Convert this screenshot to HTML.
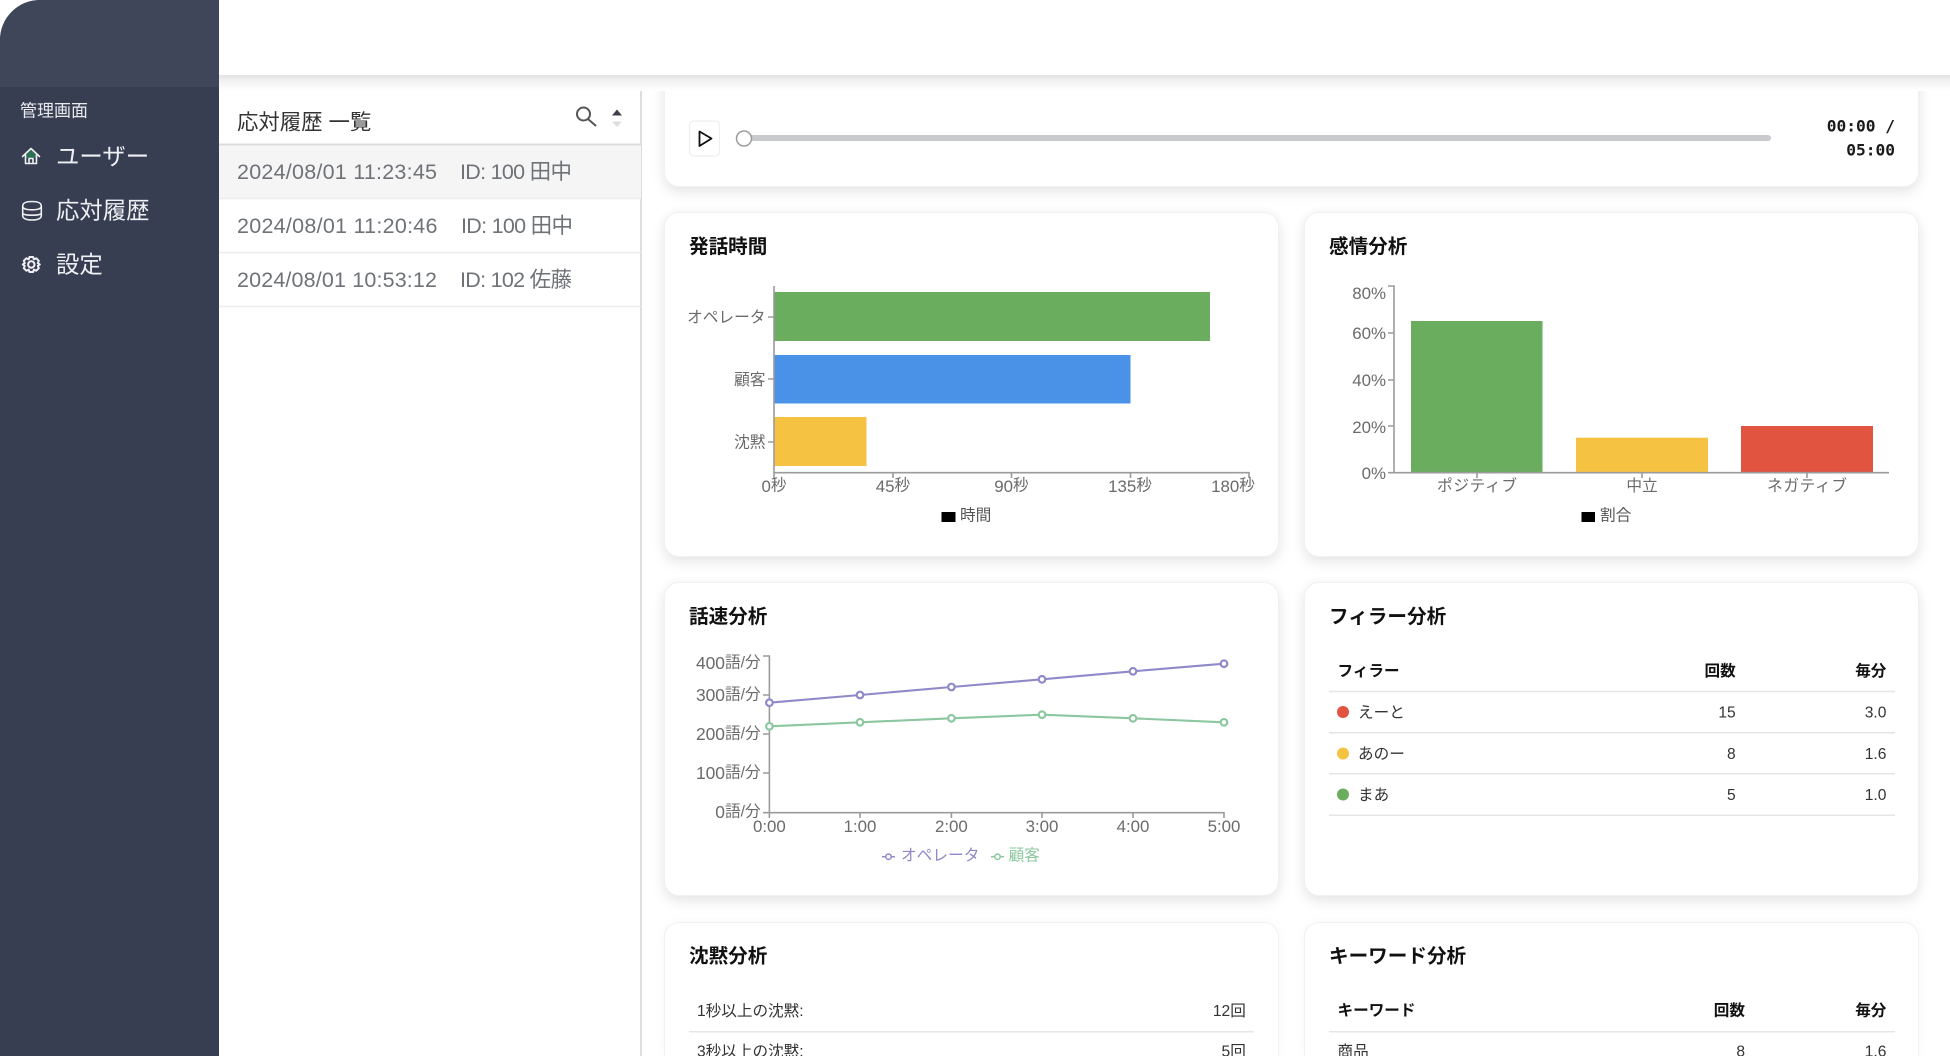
<!DOCTYPE html>
<html lang="ja"><head><meta charset="utf-8"><title>応対履歴</title>
<style>
html,body{margin:0;padding:0;width:1950px;height:1056px;overflow:hidden;background:#fff;font-family:"Liberation Sans","Noto Sans CJK JP",sans-serif}
#wrap{position:relative;width:1950px;height:1056px;overflow:hidden;background:#fff}
.abs{position:absolute;box-sizing:border-box}
.card{position:absolute;box-sizing:border-box;background:#fff;border:1px solid #f1f1f1;border-radius:15px;box-shadow:0 6px 14px rgba(0,0,0,.085),0 0 12px rgba(0,0,0,.035)}
.cut{border-bottom:0;border-radius:15px 15px 0 0;box-shadow:0 0 12px rgba(0,0,0,.035);height:134px}
svg{position:absolute;left:0;top:0;overflow:hidden}
text{font-family:"Liberation Sans","Noto Sans CJK JP",sans-serif;dominant-baseline:central;transform:translateY(1px)}
.ax{font-size:15.7px;fill:#6b6b6b}
.ax tspan{font-size:16.9px}
.ti{font-size:19.6px;font-weight:700;fill:#111}
.th{font-size:15.6px;font-weight:700;fill:#111}
.td{font-size:15.6px;fill:#333}
.r{text-anchor:end}.c{text-anchor:middle}
.li{font-size:21.5px;fill:#6f7378}
.nav{font-size:23.4px;fill:#eef0f3}
.line{stroke:#e6e6e6;stroke-width:1.5}
.axis{stroke:#9b9b9b;stroke-width:1.6;fill:none}
.mono{font-family:"DejaVu Sans Mono","Liberation Mono",monospace;font-size:16.2px;font-weight:700;fill:#1a1a1a}
</style></head>
<body>
<div id="wrap">
<div class="abs" style="left:219px;top:75px;width:423px;height:981px;background:#fff;border-right:2px solid #dedede"></div>
<div class="card" style="left:664px;top:40px;width:1255px;height:147px"></div>
<div class="card" style="left:664px;top:212px;width:615px;height:345px"></div>
<div class="card" style="left:1304px;top:212px;width:615px;height:345px"></div>
<div class="card" style="left:664px;top:582px;width:615px;height:314px"></div>
<div class="card" style="left:1304px;top:582px;width:615px;height:314px"></div>
<div class="card cut" style="left:664px;top:922px;width:615px"></div>
<div class="card cut" style="left:1304px;top:922px;width:615px"></div>
<div class="abs" style="left:219px;top:0;width:1731px;height:75px;background:#fff"></div>
<div class="abs" style="left:219px;top:75px;width:1731px;height:16px;background:linear-gradient(#e3e3e3,#f2f2f2 40%,#fcfcfc 85%,#fff)"></div>
<div class="abs" style="left:0;top:0;width:219px;height:1056px;background:#373e52;border-top-left-radius:40px;overflow:hidden"><div style="height:87px;background:#3f4659"></div></div>

<svg width="1950" height="1056" viewBox="0 0 1950 1056" xmlns="http://www.w3.org/2000/svg">
<!-- sidebar -->
<text x="20" y="110" font-size="17" fill="#e8eaee">管理画面</text>
<text x="56" y="155.500" class="nav">ユーザー</text>
<text x="56" y="209.500" class="nav">応対履歴</text>
<text x="56" y="263.300" class="nav">設定</text>
<path d="M31 149.500L24 156.500H26V158L36.500 158V156.500H38.500Z" fill="#2f6f55"/>
<g fill="none" stroke="#eef0f3" stroke-width="1.600" stroke-linejoin="round" stroke-linecap="round">
<path d="M22.500 156.500L31 148.500L39.500 156.500M25.500 155V163.500H36.500V155M29 163.500V158.500H33V163.500"/>
<path d="M22.700 206C22.700 203 26.500 201.500 32 201.500S41.300 203 41.300 206V215.500C41.300 218.500 37.500 220 32 220S22.700 218.500 22.700 215.500ZM22.700 206C22.700 208.800 26.500 209.800 32 209.800S41.300 208.800 41.300 206M22.700 213C22.700 214.500 26.500 215.200 32 215.200S41.300 214.500 41.300 213"/>
</g>
<g fill="none" stroke="#eef0f3" stroke-linejoin="round">
<circle cx="31.300" cy="264.500" r="3.200" stroke-width="2"/>
<path stroke-width="2" d="M29.500 257H33.100L33.900 259.300L36.300 258.300L38.800 260.800L37.800 263.200L39.800 264.500L37.800 265.800L38.800 268.200L36.300 270.700L33.900 269.700L33.100 272H29.500L28.700 269.700L26.300 270.700L23.800 268.200L24.800 265.800L22.800 264.500L24.800 263.200L23.800 260.800L26.300 258.300L28.700 259.300Z"/>
</g>
<!-- list -->
<text x="237" y="121.500" font-size="21.400" fill="#333">応対履歴 一覧</text>
<g fill="none" stroke="#555" stroke-width="2" stroke-linecap="round"><circle cx="583.500" cy="114" r="6.500"/><path d="M588.500 119.500L595.500 125.500"/></g>
<path d="M612 115.500L617 109.500L622 115.500Z" fill="#3c3f48"/><path d="M612 121.500L617 127L622 121.500Z" fill="#dedede"/>
<rect x="219" y="144" width="422" height="54" fill="#f5f5f5"/>
<path d="M219 144.500H641" stroke="#dcdcdc" stroke-width="2"/>
<path d="M219 198.500H641M219 252.500H641M219 306.500H641" stroke="#ececec" stroke-width="1.500"/>
<text x="237" y="171" class="li" textLength="200">2024/08/01 11:23:45</text>
<text x="460" y="171" class="li" textLength="112">ID: 100 田中</text>
<text x="237" y="225" class="li" textLength="200.500">2024/08/01 11:20:46</text>
<text x="461" y="225" class="li" textLength="112">ID: 100 田中</text>
<text x="237" y="279" class="li" textLength="200">2024/08/01 10:53:12</text>
<text x="460" y="279" class="li" textLength="112">ID: 102 佐藤</text>
<!-- player -->
<rect x="689.500" y="121" width="30" height="35" rx="4.500" fill="#fff" stroke="#eeeeee" stroke-width="1.200"/>
<path d="M699.500 131.500L711.500 138.500L699.500 146Z" fill="none" stroke="#111" stroke-width="1.800" stroke-linejoin="round"/>
<rect x="745" y="135" width="1026" height="6" rx="3" fill="#c9cace"/>
<circle cx="744" cy="138.500" r="7.500" fill="#fff" stroke="#9c9c9c" stroke-width="1.500"/>
<text x="1895" y="125" class="mono r">00:00 /</text>
<text x="1895" y="149" class="mono r">05:00</text>
<!-- chart1 -->
<text x="689" y="246" class="ti">発話時間</text>
<rect x="774" y="292" width="436" height="49" fill="#6aad5e"/>
<rect x="774" y="355" width="356.500" height="48.500" fill="#4a92e8"/>
<rect x="774" y="417" width="92.500" height="49" fill="#f5c242"/>
<path class="axis" d="M774 286V478M768 317H774M768 379H774M768 442H774M774 472.700H1249V478M893 472.700V478M1011.500 472.700V478M1130.500 472.700V478"/>
<g class="ax r"><text x="765.500" y="317">オペレータ</text><text x="765.500" y="379.500">顧客</text><text x="765.500" y="442">沈黙</text></g>
<g class="ax c"><text x="774" y="485"><tspan>0</tspan>秒</text><text x="893" y="485"><tspan>45</tspan>秒</text><text x="1011.500" y="485"><tspan>90</tspan>秒</text><text x="1130" y="485"><tspan>135</tspan>秒</text><text x="1233" y="485"><tspan>180</tspan>秒</text></g>
<rect x="941.500" y="512" width="14" height="10" fill="#000"/>
<text x="960" y="515" class="ax" style="fill:#555">時間</text>
<!-- chart2 -->
<text x="1329" y="246" class="ti">感情分析</text>
<rect x="1411" y="321" width="131.500" height="152" fill="#6aad5e"/>
<rect x="1576" y="437.700" width="132" height="35.300" fill="#f5c242"/>
<rect x="1741" y="426" width="132" height="47" fill="#e05440"/>
<path class="axis" d="M1388 286H1394V472.700M1388 333H1394M1388 380H1394M1388 426H1394M1388 472.700H1889M1477 472.700V478M1642 472.700V478M1807 472.700V478"/>
<g class="ax r"><text x="1386" y="292"><tspan>80%</tspan></text><text x="1386" y="332"><tspan>60%</tspan></text><text x="1386" y="379"><tspan>40%</tspan></text><text x="1386" y="426"><tspan>20%</tspan></text><text x="1386" y="472"><tspan>0%</tspan></text></g>
<g class="ax c"><text x="1477" y="485.500" textLength="80">ポジティブ</text><text x="1642" y="485.500">中立</text><text x="1807" y="485.500" textLength="80">ネガティブ</text></g>
<rect x="1581.500" y="512" width="13.500" height="10" fill="#000"/>
<text x="1600" y="515" class="ax" style="fill:#555">割合</text>
<!-- line chart -->
<text x="689" y="616" class="ti">話速分析</text>
<path class="axis" d="M763 656H769.400V812.700M763 695H769.400M763 734H769.400M763 773H769.400M763 812.700H1224V818M860 812.700V818M951.400 812.700V818M1042 812.700V818M1133 812.700V818M769.400 812.700V818"/>
<polyline points="769.400,702.700 860,695 951.400,687 1042,679.300 1133,671.300 1224,663.700" fill="none" stroke="#8f88c9" stroke-width="2.100"/>
<polyline points="769.400,726.300 860,722.300 951.400,718.300 1042,714.700 1133,718.300 1224,722.300" fill="none" stroke="#8cc7a0" stroke-width="2.100"/>
<g fill="#fff" stroke="#8f88c9" stroke-width="2.200"><circle cx="769.400" cy="702.700" r="3.300"/><circle cx="860" cy="695" r="3.300"/><circle cx="951.400" cy="687" r="3.300"/><circle cx="1042" cy="679.300" r="3.300"/><circle cx="1133" cy="671.300" r="3.300"/><circle cx="1224" cy="663.700" r="3.300"/></g>
<g fill="#fff" stroke="#8cc7a0" stroke-width="2.200"><circle cx="769.400" cy="726.300" r="3.300"/><circle cx="860" cy="722.300" r="3.300"/><circle cx="951.400" cy="718.300" r="3.300"/><circle cx="1042" cy="714.700" r="3.300"/><circle cx="1133" cy="718.300" r="3.300"/><circle cx="1224" cy="722.300" r="3.300"/></g>
<g class="ax r"><text x="760.700" y="662"><tspan style="font-size:17.4px">400</tspan>語/分</text><text x="760.700" y="694"><tspan style="font-size:17.4px">300</tspan>語/分</text><text x="760.700" y="733"><tspan style="font-size:17.4px">200</tspan>語/分</text><text x="760.700" y="772"><tspan style="font-size:17.4px">100</tspan>語/分</text><text x="760.700" y="811"><tspan style="font-size:17.4px">0</tspan>語/分</text></g>
<g class="ax c"><text x="769.400" y="825"><tspan>0:00</tspan></text><text x="860" y="825"><tspan>1:00</tspan></text><text x="951.400" y="825"><tspan>2:00</tspan></text><text x="1042" y="825"><tspan>3:00</tspan></text><text x="1133" y="825"><tspan>4:00</tspan></text><text x="1224" y="825"><tspan>5:00</tspan></text></g>
<path d="M882 856.700H895" stroke="#8f88c9" stroke-width="1.500"/><circle cx="888.500" cy="856.700" r="2.700" fill="#fff" stroke="#8f88c9" stroke-width="1.500"/>
<text x="901" y="855" font-size="15.700" fill="#8f88c9">オペレータ</text>
<path d="M991 856.700H1004" stroke="#8cc7a0" stroke-width="1.500"/><circle cx="997.500" cy="856.700" r="2.700" fill="#fff" stroke="#8cc7a0" stroke-width="1.500"/>
<text x="1008.600" y="855" font-size="15.700" fill="#8cc7a0">顧客</text>
<!-- filler -->
<text x="1329" y="616" class="ti">フィラー分析</text>
<text x="1337.500" y="670.700" class="th">フィラー</text><text x="1735.700" y="670.700" class="th r">回数</text><text x="1886.400" y="670.700" class="th r">毎分</text>
<path class="line" d="M1329 691.500H1895M1329 732.700H1895M1329 773.700H1895M1329 815.300H1895"/>
<circle cx="1343" cy="712" r="6" fill="#e05440"/><text x="1358" y="712" class="td">えーと</text><text x="1735.700" y="712" class="td r">15</text><text x="1886.400" y="712" class="td r">3.0</text>
<circle cx="1343" cy="753.500" r="6" fill="#f5c242"/><text x="1358" y="753.500" class="td">あのー</text><text x="1735.700" y="753.500" class="td r">8</text><text x="1886.400" y="753.500" class="td r">1.6</text>
<circle cx="1343" cy="794.500" r="6" fill="#6aad5e"/><text x="1358" y="794.500" class="td">まあ</text><text x="1735.700" y="794.500" class="td r">5</text><text x="1886.400" y="794.500" class="td r">1.0</text>
<!-- silence -->
<text x="689" y="955.500" class="ti">沈黙分析</text>
<text x="697" y="1010.700" class="td">1秒以上の沈黙:</text><text x="1245.800" y="1010.700" class="td r">12回</text>
<path class="line" d="M689 1031.700H1254"/>
<text x="697" y="1051" class="td">3秒以上の沈黙:</text><text x="1245.800" y="1051" class="td r">5回</text>
<!-- keyword -->
<text x="1329" y="955.500" class="ti">キーワード分析</text>
<text x="1337.500" y="1010" class="th">キーワード</text><text x="1745" y="1010" class="th r">回数</text><text x="1886.400" y="1010" class="th r">毎分</text>
<path class="line" d="M1329 1031.700H1895"/>
<text x="1337.500" y="1051" class="td">商品</text><text x="1745" y="1051" class="td r">8</text><text x="1886.400" y="1051" class="td r">1.6</text>
</svg>
</div>
</body></html>
